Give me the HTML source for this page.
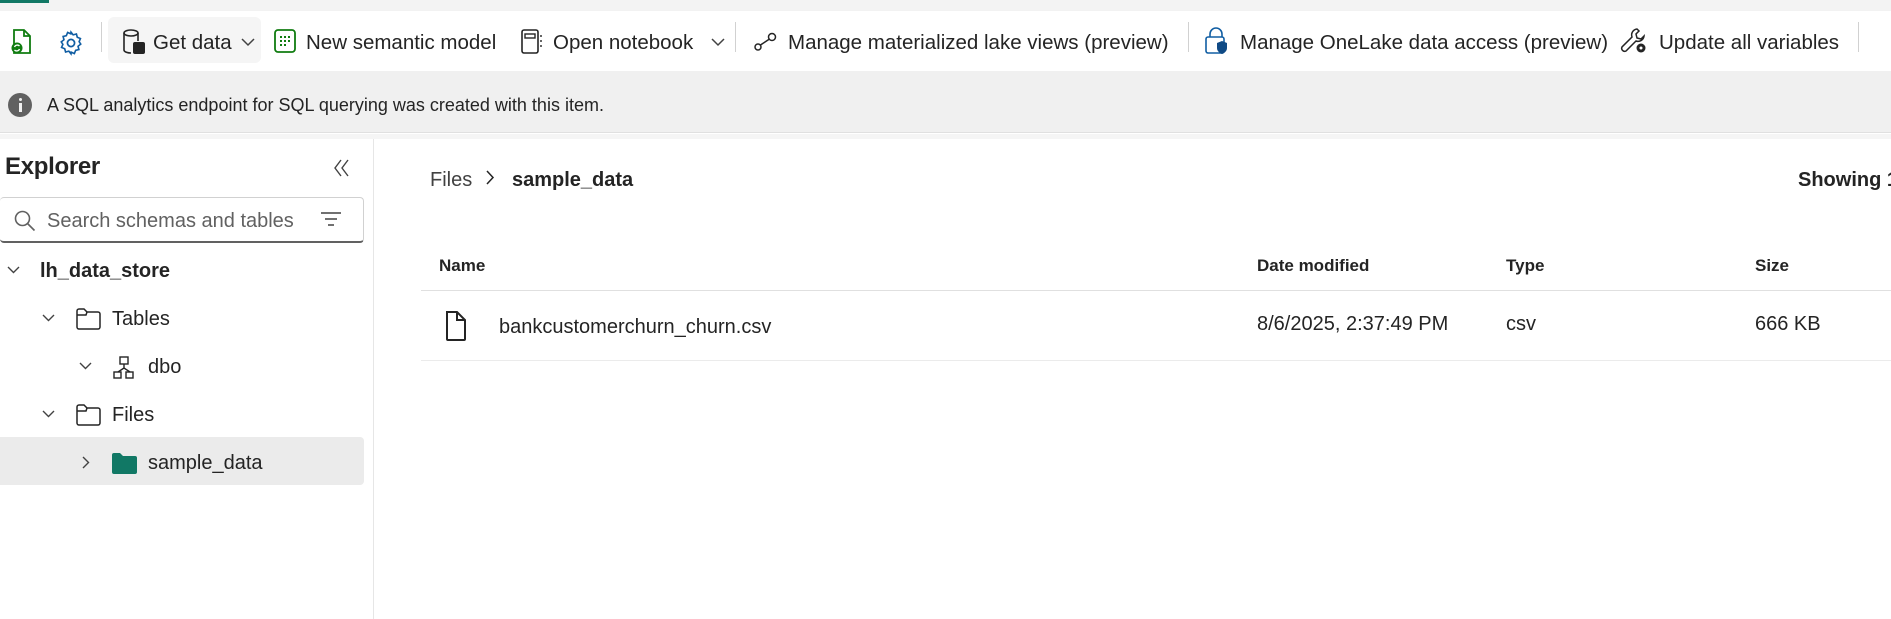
<!DOCTYPE html>
<html><head><meta charset="utf-8"><style>
*{box-sizing:border-box;margin:0;padding:0}
body{width:1891px;height:619px;overflow:hidden;background:#fff;font-family:"Liberation Sans",sans-serif;color:#242424;position:relative}
.a{position:absolute;white-space:nowrap}
svg{position:absolute;overflow:visible}
.t{font-size:20px}
.tb{font-size:20.5px;top:31px}
</style></head><body>
<div class="a" style="left:0;top:0;width:1891px;height:11px;background:#f3f3f3"></div>
<div class="a" style="left:0;top:0;width:49px;height:3px;background:#117865"></div>
<div class="a" style="left:0;top:11px;width:1891px;height:60px;background:#fff;box-shadow:0 2px 3px rgba(0,0,0,.12)"></div>
<div class="a" style="left:0;top:71px;width:1891px;height:62px;background:#f0f0f0;border-bottom:1px solid #e0e0e0"></div>
<div class="a" style="left:0;top:134px;width:1891px;height:5px;background:#f5f5f5"></div>

<!-- toolbar -->
<svg style="left:11px;top:29px" width="22" height="26" viewBox="0 0 22 26"><path d="M3 1h10l6 6v17H3z" fill="none" stroke="#107c10" stroke-width="1.8"/><path d="M13 1v6h6" fill="none" stroke="#107c10" stroke-width="1.8"/><circle cx="6" cy="19" r="5.5" fill="#107c10"/><path d="M3.5 18a3 3 0 015-1M8.5 20a3 3 0 01-5 1" stroke="#fff" stroke-width="1.3" fill="none"/></svg>
<svg style="left:58px;top:30px" width="26" height="26" viewBox="0 0 24 24"><path d="M12 2l2 2.5 3-.8.8 3 2.9 1.2-1.2 2.9L21 13l-2.5 2 .8 3-3 .8-1.2 2.9-2.9-1.2L12 22l-2-2.5-3 .8-.8-3-2.9-1.2 1.2-2.9L3 11l2.5-2-.8-3 3-.8L8.9 2.3l2.9 1.2z" fill="none" stroke="#115ea3" stroke-width="1.5"/><circle cx="12" cy="12" r="3.3" fill="none" stroke="#115ea3" stroke-width="1.6"/></svg>
<div class="a" style="left:101px;top:22px;width:1px;height:30px;background:#d1d1d1"></div>
<div class="a" style="left:108px;top:17px;width:153px;height:46px;background:#f5f5f5;border-radius:6px"></div>
<svg style="left:122px;top:28px" width="24" height="28" viewBox="0 0 24 28"><ellipse cx="9" cy="5" rx="7" ry="3" fill="none" stroke="#242424" stroke-width="1.6"/><path d="M2 5v17c0 1.7 3 3 7 3" fill="none" stroke="#242424" stroke-width="1.6"/><path d="M16 5v8" stroke="#242424" stroke-width="1.6"/><rect x="11" y="14" width="12" height="12" rx="2" fill="#242424"/></svg>
<div class="a tb" style="left:153px">Get data</div>
<svg style="left:241px;top:38px" width="14" height="9" viewBox="0 0 14 9"><path d="M1 1l6 6 6-6" fill="none" stroke="#424242" stroke-width="1.5"/></svg>
<svg style="left:274px;top:29px" width="22" height="24" viewBox="0 0 22 24"><rect x="1" y="1" width="20" height="22" rx="3" fill="none" stroke="#107c10" stroke-width="1.8"/><g fill="#107c10"><rect x="6" y="7" width="2" height="2"/><rect x="10" y="7" width="2" height="2"/><rect x="14" y="7" width="2" height="2"/><rect x="6" y="11" width="2" height="2"/><rect x="10" y="11" width="2" height="2"/><rect x="14" y="11" width="2" height="2"/><rect x="6" y="15" width="2" height="2"/><rect x="10" y="15" width="2" height="2"/></g></svg>
<div class="a tb" style="left:306px">New semantic model</div>
<svg style="left:521px;top:29px" width="22" height="25" viewBox="0 0 22 25"><rect x="1" y="1" width="16" height="23" rx="2" fill="none" stroke="#242424" stroke-width="1.6"/><rect x="4" y="5" width="10" height="4" fill="none" stroke="#242424" stroke-width="1.4"/><path d="M20 6v2M20 11v2M20 16v2" stroke="#242424" stroke-width="1.4"/></svg>
<div class="a tb" style="left:553px">Open notebook</div>
<svg style="left:711px;top:38px" width="14" height="9" viewBox="0 0 14 9"><path d="M1 1l6 6 6-6" fill="none" stroke="#424242" stroke-width="1.5"/></svg>
<div class="a" style="left:735px;top:22px;width:1px;height:30px;background:#d1d1d1"></div>
<svg style="left:754px;top:32px" width="24" height="20" viewBox="0 0 24 20"><circle cx="4" cy="15" r="3" fill="none" stroke="#242424" stroke-width="1.5"/><circle cx="18" cy="5" r="3.5" fill="none" stroke="#242424" stroke-width="1.5"/><path d="M6.5 13l9-6" stroke="#242424" stroke-width="1.5"/></svg>
<div class="a tb" style="left:788px">Manage materialized lake views (preview)</div>
<div class="a" style="left:1188px;top:22px;width:1px;height:30px;background:#d1d1d1"></div>
<svg style="left:1205px;top:27px" width="24" height="30" viewBox="0 0 24 30"><path d="M5 10V7a6 6 0 0112 0v3" fill="none" stroke="#115ea3" stroke-width="1.6"/><rect x="1" y="10" width="18" height="16" rx="2" fill="none" stroke="#115ea3" stroke-width="1.6"/><path d="M17 14l5 2v5c0 3-2.5 5-5 6-2.5-1-5-3-5-6v-5z" fill="#0f4a85"/></svg>
<div class="a tb" style="left:1240px">Manage OneLake data access (preview)</div>
<svg style="left:1620px;top:27px" width="28" height="28" viewBox="0 0 28 28"><path d="M17 2a6 6 0 00-5 8L2 20a3 3 0 004 4l10-10a6 6 0 008-5l-3 3-4-1-1-4 3-3z" fill="none" stroke="#242424" stroke-width="1.5"/><circle cx="21" cy="21" r="4.5" fill="#242424"/><circle cx="21" cy="21" r="1.5" fill="#fff"/></svg>
<div class="a tb" style="left:1659px">Update all variables</div>
<div class="a" style="left:1858px;top:22px;width:1px;height:30px;background:#d1d1d1"></div>

<!-- info bar -->
<div class="a" style="left:8px;top:93px;width:24px;height:24px;border-radius:50%;background:#616161"></div>
<div class="a" style="left:18.5px;top:98px;width:3px;height:3px;background:#f0f0f0;border-radius:50%"></div>
<div class="a" style="left:18.5px;top:103px;width:3px;height:9px;background:#f0f0f0"></div>
<div class="a" style="left:47px;top:95px;font-size:18px">A SQL analytics endpoint for SQL querying was created with this item.</div>

<!-- sidebar -->
<div class="a" style="left:373px;top:139px;width:1px;height:480px;background:#e6e6e6"></div>
<div class="a" style="left:5px;top:153px;font-size:24px;font-weight:bold;color:#242424;letter-spacing:-0.3px">Explorer</div>
<svg style="left:333px;top:158px" width="18" height="20" viewBox="0 0 18 20"><path d="M8 2L2 10l6 8M15 2L9 10l6 8" fill="none" stroke="#424242" stroke-width="1.4"/></svg>
<div class="a" style="left:0;top:197px;width:364px;height:46px;border:1px solid #d1d1d1;border-bottom:2px solid #616161;border-radius:4px;border-left:none"></div>
<svg style="left:14px;top:210px" width="22" height="22" viewBox="0 0 22 22"><circle cx="8.5" cy="8.5" r="7" fill="none" stroke="#616161" stroke-width="1.6"/><path d="M13.5 13.5l7 7" stroke="#616161" stroke-width="1.6"/></svg>
<div class="a" style="left:47px;top:210px;font-size:20px;color:#616161">Search schemas and tables</div>
<svg style="left:320px;top:211px" width="22" height="16" viewBox="0 0 22 16"><path d="M1 2h20M5 8h12M8 14h6" stroke="#424242" stroke-width="1.6"/></svg>

<svg style="left:7px;top:266px" width="13" height="8" viewBox="0 0 13 8"><path d="M1 1l5.5 5.5L12 1" fill="none" stroke="#424242" stroke-width="1.4"/></svg>
<div class="a t" style="left:40px;top:260px;font-weight:bold;font-size:20px">lh_data_store</div>
<svg style="left:42px;top:314px" width="13" height="8" viewBox="0 0 13 8"><path d="M1 1l5.5 5.5L12 1" fill="none" stroke="#424242" stroke-width="1.4"/></svg>
<svg style="left:76px;top:308px" width="25" height="22" viewBox="0 0 25 22"><path d="M1 3a2 2 0 012-2h5l3 3h11a2 2 0 012 2v13a2 2 0 01-2 2H3a2 2 0 01-2-2zM1 7h9l1-3" fill="none" stroke="#242424" stroke-width="1.5"/></svg>
<div class="a t" style="left:112px;top:308px">Tables</div>
<svg style="left:79px;top:362px" width="13" height="8" viewBox="0 0 13 8"><path d="M1 1l5.5 5.5L12 1" fill="none" stroke="#424242" stroke-width="1.4"/></svg>
<svg style="left:113px;top:356px" width="22" height="23" viewBox="0 0 22 23"><rect x="7" y="1" width="8" height="7" fill="none" stroke="#242424" stroke-width="1.4"/><path d="M11 8v4M5 16l6-4 6 4" fill="none" stroke="#242424" stroke-width="1.4"/><rect x="1" y="16" width="7" height="6" fill="none" stroke="#242424" stroke-width="1.4"/><rect x="13" y="16" width="7" height="6" fill="none" stroke="#242424" stroke-width="1.4"/></svg>
<div class="a t" style="left:148px;top:356px">dbo</div>
<svg style="left:42px;top:410px" width="13" height="8" viewBox="0 0 13 8"><path d="M1 1l5.5 5.5L12 1" fill="none" stroke="#424242" stroke-width="1.4"/></svg>
<svg style="left:76px;top:404px" width="25" height="22" viewBox="0 0 25 22"><path d="M1 3a2 2 0 012-2h5l3 3h11a2 2 0 012 2v13a2 2 0 01-2 2H3a2 2 0 01-2-2zM1 7h9l1-3" fill="none" stroke="#242424" stroke-width="1.5"/></svg>
<div class="a t" style="left:112px;top:404px">Files</div>
<div class="a" style="left:0;top:437px;width:364px;height:48px;background:#ebebeb;border-radius:0 4px 4px 0"></div>
<svg style="left:82px;top:456px" width="8" height="13" viewBox="0 0 8 13"><path d="M1 1l5.5 5.5L1 12" fill="none" stroke="#424242" stroke-width="1.4"/></svg>
<svg style="left:112px;top:452px" width="25" height="22" viewBox="0 0 25 22"><path d="M0 3a2 2 0 012-2h6l3 3h12a2 2 0 012 2v14a2 2 0 01-2 2H2a2 2 0 01-2-2z" fill="#117865"/></svg>
<div class="a t" style="left:148px;top:452px">sample_data</div>

<!-- main -->
<div class="a t" style="left:430px;top:169px;color:#424242">Files</div>
<svg style="left:486px;top:170px" width="9" height="15" viewBox="0 0 9 15"><path d="M1 1l6 6.5L1 14" fill="none" stroke="#242424" stroke-width="1.5"/></svg>
<div class="a t" style="left:512px;top:169px;font-weight:bold">sample_data</div>
<div class="a t" style="left:1798px;top:169px;font-weight:bold">Showing 1</div>

<div class="a" style="left:439px;top:256px;font-size:17px;font-weight:bold">Name</div>
<div class="a" style="left:1257px;top:256px;font-size:17px;font-weight:bold">Date modified</div>
<div class="a" style="left:1506px;top:256px;font-size:17px;font-weight:bold">Type</div>
<div class="a" style="left:1755px;top:256px;font-size:17px;font-weight:bold">Size</div>
<div class="a" style="left:421px;top:290px;width:1470px;height:1px;background:#e0e0e0"></div>
<svg style="left:445px;top:311px" width="22" height="30" viewBox="0 0 22 30"><path d="M2 1h10l8 8v19a1 1 0 01-1 1H3a1 1 0 01-1-1z" fill="none" stroke="#242424" stroke-width="2"/><path d="M12 1v8h8" fill="none" stroke="#242424" stroke-width="2"/></svg>
<div class="a t" style="left:499px;top:316px">bankcustomerchurn_churn.csv</div>
<div class="a t" style="left:1257px;top:313px">8/6/2025, 2:37:49 PM</div>
<div class="a t" style="left:1506px;top:313px">csv</div>
<div class="a t" style="left:1755px;top:313px">666 KB</div>
<div class="a" style="left:421px;top:360px;width:1470px;height:1px;background:#ebebeb"></div>
</body></html>
